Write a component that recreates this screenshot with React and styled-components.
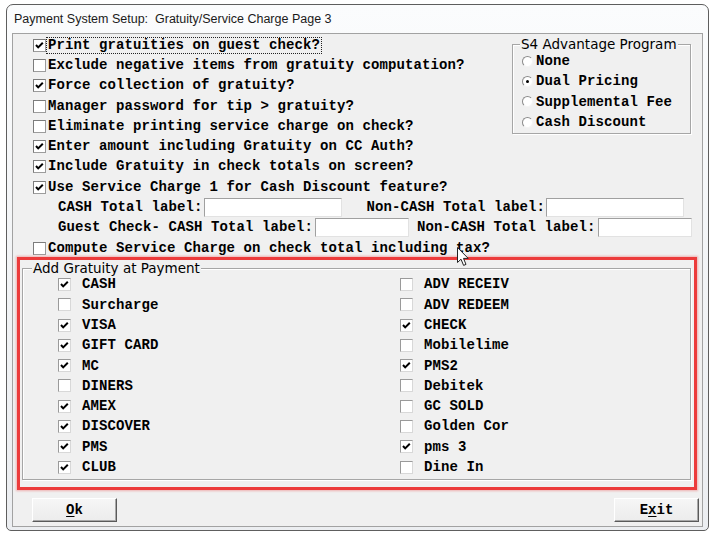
import React from "react";
import styled, { createGlobalStyle } from "styled-components";

const mono = `"Liberation Mono", "DejaVu Sans Mono", monospace`;
const sans = `"Liberation Sans", Arial, sans-serif`;
const legendFont = `"DejaVu Sans", Verdana, sans-serif`;

const GlobalStyle = createGlobalStyle`
  html, body {
    margin: 0;
    padding: 0;
    background: #ffffff;
  }
  body {
    width: 714px;
    height: 536px;
    overflow: hidden;
  }
`;

const topOptions = [
  { label: "Print gratuities on guest check?", checked: true, focus: true },
  { label: "Exclude negative items from gratuity computation?", checked: false },
  { label: "Force collection of gratuity?", checked: true },
  { label: "Manager password for tip > gratuity?", checked: false },
  { label: "Eliminate printing service charge on check?", checked: false },
  { label: "Enter amount including Gratuity on CC Auth?", checked: true },
  { label: "Include Gratuity in check totals on screen?", checked: true },
  { label: "Use Service Charge 1 for Cash Discount feature?", checked: true },
];

const programs = [
  { label: "None", selected: false },
  { label: "Dual Pricing", selected: true },
  { label: "Supplemental Fee", selected: false },
  { label: "Cash Discount", selected: false },
];

const tenders = [
  ["CASH", true],
  ["Surcharge", false],
  ["VISA", true],
  ["GIFT CARD", true],
  ["MC", true],
  ["DINERS", false],
  ["AMEX", true],
  ["DISCOVER", true],
  ["PMS", true],
  ["CLUB", true],
  ["ADV RECEIV", false],
  ["ADV REDEEM", false],
  ["CHECK", true],
  ["Mobilelime", false],
  ["PMS2", true],
  ["Debitek", false],
  ["GC SOLD", false],
  ["Golden Cor", false],
  ["pms 3", true],
  ["Dine In", false],
];

const CheckBox = ({ checked, flat }) => (
  <Box $flat={flat}>
    {checked && (
      <svg width="9" height="9" viewBox="0 0 9 9">
        <polyline
          points="1,4 3.2,6.4 7.8,1.8"
          fill="none"
          stroke="#000"
          strokeWidth="2"
        />
      </svg>
    )}
  </Box>
);

const Cursor = () => (
  <CursorWrap>
    <svg width="13" height="20" viewBox="0 0 13 20">
      <path
        d="M0.5 0.5 L0.5 15.5 L4 12.2 L6.6 18.4 L9 17.4 L6.5 11.4 L11.2 11.4 Z"
        fill="#fff"
        stroke="#222"
        strokeWidth="1"
        strokeLinejoin="round"
      />
    </svg>
  </CursorWrap>
);

const App = () => {
  return (
    <>
      <GlobalStyle />
      <Window>
        <TitleBar>Payment System Setup:&nbsp; Gratuity/Service Charge Page 3</TitleBar>
        <Client>
          <TopSection>
            <OptionList>
              {topOptions.map((o) => (
                <Row key={o.label}>
                  <CheckBox checked={o.checked} />
                  <OptionText $focus={o.focus}>{o.label}</OptionText>
                </Row>
              ))}
            </OptionList>
            <ProgramBox>
              <GroupTitle>S4 Advantage Program</GroupTitle>
              <RadioList>
                {programs.map((p) => (
                  <Row key={p.label}>
                    <Radio $selected={p.selected} />
                    <RadioText>{p.label}</RadioText>
                  </Row>
                ))}
              </RadioList>
            </ProgramBox>
          </TopSection>

          <LabelRow>
            <span>CASH Total label:</span>
            <Field $w={138} $gap={1} />
            <LabelText $gap={25}>Non-CASH Total label:</LabelText>
            <Field $w={138} $gap={1} />
          </LabelRow>
          <LabelRow>
            <span>Guest Check- CASH Total label:</span>
            <Field $w={94} $gap={2} />
            <LabelText $gap={8}>Non-CASH Total label:</LabelText>
            <Field $w={94} $gap={2} />
          </LabelRow>
          <OptionList>
            <Row>
              <CheckBox checked={false} />
              <OptionText>Compute Service Charge on check total including tax?</OptionText>
            </Row>
          </OptionList>

          <Highlight>
            <TenderGroup>
              <GroupTitle $inner>Add Gratuity at Payment</GroupTitle>
              <TenderGrid>
                {tenders.map(([name, checked]) => (
                  <TenderItem key={name}>
                    <CheckBox checked={checked} flat />
                    <span>{name}</span>
                  </TenderItem>
                ))}
              </TenderGrid>
            </TenderGroup>
          </Highlight>

          <ButtonBar>
            <Button>
              <u>O</u>k
            </Button>
            <Button>
              E<u>x</u>it
            </Button>
          </ButtonBar>
        </Client>
        <Cursor />
      </Window>
    </>
  );
};

export default App;

const Window = styled.div`
  position: relative;
  box-sizing: border-box;
  margin: 4px 0 0 6px;
  width: 703px;
  height: 527px;
  border: 1px solid #5e5e5e;
  border-radius: 7px 7px 5px 5px;
  background: linear-gradient(180deg, #fbfcfd 0%, #f1f3f5 60%, #eceef1 100%);
  padding: 0 5px 3px 5px;
  display: flex;
  flex-direction: column;
`;

const TitleBar = styled.div`
  height: 28px;
  flex-shrink: 0;
  display: flex;
  align-items: center;
  padding: 0 0 1px 2px;
  box-sizing: border-box;
  font: 12.5px ${sans};
  color: #1a1a1a;
  white-space: nowrap;
`;

const Client = styled.div`
  flex: 1;
  min-height: 0;
  border: 1px solid #a2a2a2;
  background: #f0f0f0;
  display: flex;
  flex-direction: column;
  font: bold 14px ${mono};
  letter-spacing: 0.1px;
  color: #000;
`;

const TopSection = styled.div`
  display: flex;
  align-items: flex-start;
`;

const OptionList = styled.div`
  display: flex;
  flex-direction: column;
  padding-left: 20px;
`;

const Row = styled.div`
  box-sizing: border-box;
  height: 20.3px;
  padding-top: 2px;
  display: flex;
  align-items: center;
  white-space: nowrap;
`;

const Box = styled.span`
  box-sizing: border-box;
  width: 13px;
  height: 13px;
  flex-shrink: 0;
  display: inline-flex;
  align-items: center;
  justify-content: center;
  background: #fff;
  border: 1px solid;
  border-color: ${(p) =>
    p.$flat ? "#9a9a9a #d8d8d8 #d8d8d8 #9a9a9a" : "#7c7c7c #9c9c9c #9c9c9c #7c7c7c"};
`;

const OptionText = styled.span`
  margin-left: 1px;
  padding: 0 1px;
  line-height: 15px;
  outline: ${(p) => (p.$focus ? "1px dotted #222" : "none")};
`;

const ProgramBox = styled.fieldset`
  box-sizing: border-box;
  width: 179px;
  min-width: 0;
  margin: 3px 11px 0 auto;
  padding: 0 0 2px 9px;
  border: 1px solid #a6a6a6;
  box-shadow: inset 1px 1px 0 #fff, 1px 1px 0 #fff;
`;

const GroupTitle = styled.legend`
  margin-left: ${(p) => (p.$inner ? "9px" : "-2px")};
  padding: 0 1px;
  font: 13.5px ${legendFont};
  letter-spacing: 0;
  line-height: 15px;
  color: #000;
  background: #f0f0f0;
`;

const RadioList = styled.div`
  margin-top: -2px;
`;

const Radio = styled.span`
  box-sizing: border-box;
  width: 11px;
  height: 11px;
  flex-shrink: 0;
  border-radius: 50%;
  border: 1px solid;
  border-color: #8a8a8a #f4f4f4 #f4f4f4 #8a8a8a;
  background: #fff;
  display: inline-flex;
  align-items: center;
  justify-content: center;
  &::after {
    content: "";
    width: 3px;
    height: 3px;
    border-radius: 50%;
    background: ${(p) => (p.$selected ? "#000" : "transparent")};
  }
`;

const RadioText = styled.span`
  margin-left: 3px;
`;

const LabelRow = styled.div`
  box-sizing: border-box;
  height: 20.3px;
  padding: 1px 0 0 45px;
  display: flex;
  align-items: center;
  white-space: nowrap;
`;

const LabelText = styled.span`
  margin-left: ${(p) => p.$gap}px;
`;

const Field = styled.span`
  box-sizing: border-box;
  display: inline-block;
  width: ${(p) => p.$w}px;
  height: 19px;
  margin-left: ${(p) => p.$gap}px;
  background: #fff;
  border: 1px solid;
  border-color: #a0a0a0 #e2e2e2 #e2e2e2 #a0a0a0;
`;

const Highlight = styled.div`
  margin: 0 5px 0 4px;
  border: 3px solid #ec3b3b;
  box-shadow: 0 0 2px 1px rgba(236, 59, 59, 0.35);
  padding: 1px 3px 7px 2px;
`;

const TenderGroup = styled.fieldset`
  margin: 0;
  padding: 0 0 2px 0;
  min-width: 0;
  border: 1px solid #a6a6a6;
  box-shadow: inset 1px 1px 0 #fff, 1px 1px 0 #fff;
`;

const TenderGrid = styled.div`
  margin-top: -2px;
  display: grid;
  grid-template-columns: 342px 1fr;
  grid-template-rows: repeat(10, 20.3px);
  grid-auto-flow: column;
  padding-left: 35px;
`;

const TenderItem = styled.div`
  display: flex;
  align-items: center;
  gap: 11px;
  white-space: nowrap;
`;

const ButtonBar = styled.div`
  display: flex;
  justify-content: space-between;
  margin: 8px 3px 0 19px;
`;

const Button = styled.button`
  box-sizing: border-box;
  width: 85px;
  height: 24px;
  padding: 0;
  font: bold 14px ${mono};
  color: #000;
  background: linear-gradient(180deg, #f6f6f6 0%, #ececec 100%);
  border: 1px solid;
  border-color: #ffffff #5a5a5a #5a5a5a #ffffff;
  box-shadow: inset -1px -1px 0 #a8a8a8;
  u {
    text-underline-offset: 2px;
  }
`;

const CursorWrap = styled.div`
  position: absolute;
  left: 450px;
  top: 242px;
  line-height: 0;
  pointer-events: none;
`;
